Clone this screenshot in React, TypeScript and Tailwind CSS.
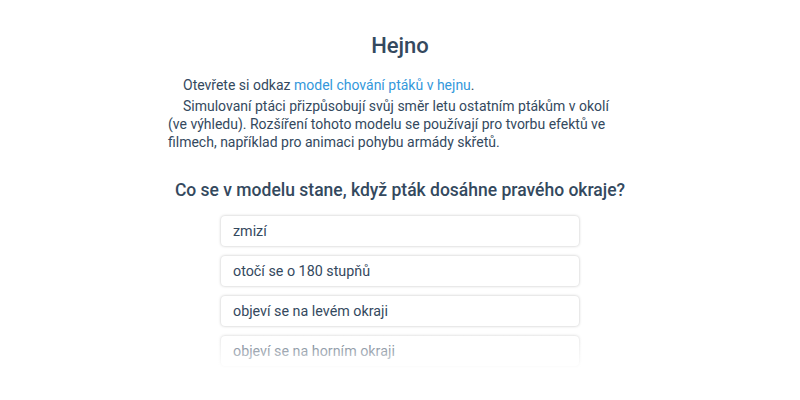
export default function App() {
  const options = ['zmizí', 'otočí se o 180 stupňů', 'objeví se na levém okraji', 'objeví se na horním okraji'];

  return (
    <div className="h-[400px] w-[800px] bg-white font-['Roboto',sans-serif] text-[#34495e]">
      <div className="relative h-[368px] overflow-hidden">
        <div className="mx-auto w-[464px] pt-[30px]">
          <h1 className="text-center text-[22px] font-medium leading-[32px]">Hejno</h1>
          <div className="pr-[10px]">
            <p className="mt-[14px] indent-[15px] text-[14px] leading-[18px]">
              Otevřete si odkaz <a className="text-[#3498db]">model chování ptáků v hejnu</a>.
            </p>
            <p className="mt-[3px] indent-[15px] text-[14px] leading-[18px]">
              Simulovaní ptáci přizpůsobují svůj směr letu ostatním ptákům v okolí (ve výhledu). Rozšíření tohoto
              modelu se používají pro tvorbu efektů ve filmech, například pro animaci pohybu armády skřetů.
            </p>
          </div>
        </div>
        <h2 className="mt-[27px] text-center text-[17.5px] font-medium leading-[24px]">
          Co se v modelu stane, když pták dosáhne pravého okraje?
        </h2>
        <div className="mx-auto mt-[14px] flex w-[358px] flex-col gap-[10px]">
          {options.map((o) => (
            <div
              key={o}
              className="h-[30px] rounded-[4px] bg-white px-[12px] text-[14.3px] leading-[30px] shadow-[0_0_3px_rgba(0,0,0,0.25)]"
            >
              {o}
            </div>
          ))}
        </div>
        <div className="pointer-events-none absolute bottom-0 left-0 right-0 h-[40px] bg-gradient-to-b from-white/0 to-white/90" />
      </div>
    </div>
  );
}
